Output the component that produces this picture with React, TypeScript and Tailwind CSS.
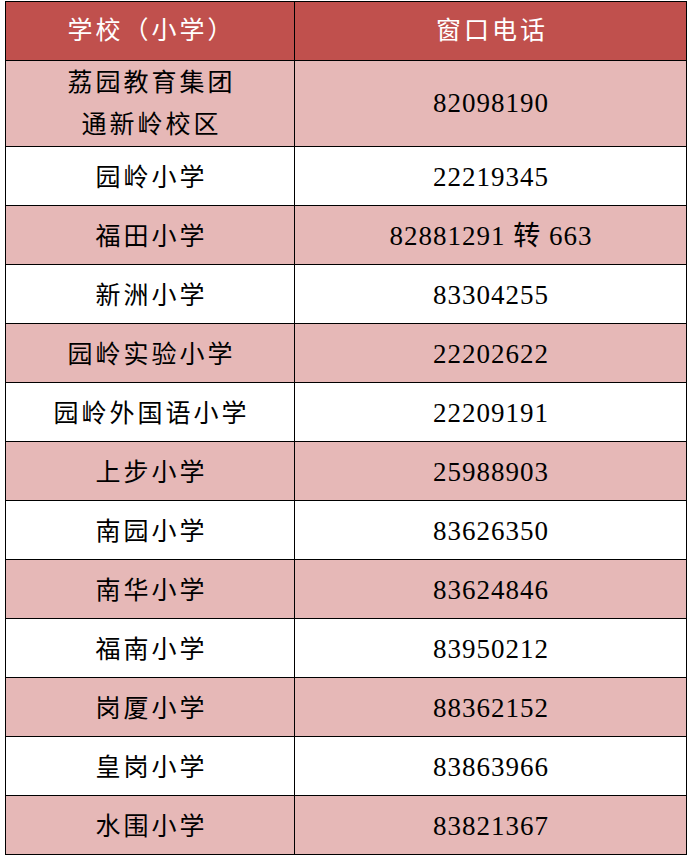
const rows: { name: string[]; phone: string }[] = [
  { name: ['荔园教育集团', '通新岭校区'], phone: '82098190' },
  { name: ['园岭小学'], phone: '22219345' },
  { name: ['福田小学'], phone: '82881291 转 663' },
  { name: ['新洲小学'], phone: '83304255' },
  { name: ['园岭实验小学'], phone: '22202622' },
  { name: ['园岭外国语小学'], phone: '22209191' },
  { name: ['上步小学'], phone: '25988903' },
  { name: ['南园小学'], phone: '83626350' },
  { name: ['南华小学'], phone: '83624846' },
  { name: ['福南小学'], phone: '83950212' },
  { name: ['岗厦小学'], phone: '88362152' },
  { name: ['皇岗小学'], phone: '83863966' },
  { name: ['水围小学'], phone: '83821367' },
];

const font = "font-['Liberation_Serif','Noto_Sans_CJK_SC',serif]";

export default function App() {
  return (
    <div className="w-[688px] h-[857px] bg-white pt-[1px] pl-[5px]">
      <div className={`w-[682px] border-t border-l border-r border-black ${font}`}>
        <div className="grid grid-cols-[289px_1fr] h-[59px] border-b border-black bg-[#c0504d] text-white">
          <div className="flex items-center justify-center border-r border-black text-[25px] tracking-[3px] pl-[3px]">
            学校（小学）
          </div>
          <div className="flex items-center justify-center text-[25px] tracking-[3px] pl-[3px]">
            窗口电话
          </div>
        </div>
        {rows.map((r, i) => {
          const pad = i === 0 ? '' : 'pt-[3px]';
          return (
            <div
              key={r.phone}
              className={`grid grid-cols-[289px_1fr] border-b border-black text-black ${
                i === 0 ? 'h-[86px]' : 'h-[59px]'
              } ${i % 2 === 0 ? 'bg-[#e6b8b7]' : 'bg-white'}`}
            >
              <div
                className={`flex flex-col items-center justify-center border-r border-black text-[25px] tracking-[3px] leading-[42px] pl-[3px] ${pad}`}
              >
                {r.name.map((n) => (
                  <span key={n}>{n}</span>
                ))}
              </div>
              <div className={`flex items-center justify-center text-[27px] tracking-[1px] pl-[1px] ${pad}`}>
                {r.phone}
              </div>
            </div>
          );
        })}
      </div>
    </div>
  );
}
